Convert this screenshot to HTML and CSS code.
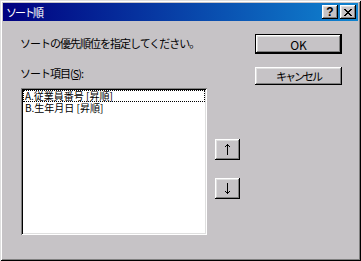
FILE: index.html
```html
<!DOCTYPE html>
<html lang="ja">
<head>
    <meta charset="UTF-8">
    <title>ソート順</title>
    <link rel="stylesheet" href="styles.css">
</head>
<body>
    <div class="window">
        <div class="titlebar">
            <span class="title">ソート順</span>
            <div class="title-buttons">
                <button class="tbtn help">?</button>
                <button class="tbtn close">
                    <svg width="8" height="7" viewBox="0 0 8 7" shape-rendering="crispEdges">
                        <path d="M0 0h2v1h-2zM6 0h2v1h-2zM1 1h2v1h-2zM5 1h2v1h-2zM2 2h4v1h-4zM3 3h2v1h-2zM2 4h4v1h-4zM1 5h2v1h-2zM5 5h2v1h-2zM0 6h2v1h-2zM6 6h2v1h-2z" fill="#000"/>
                    </svg>
                </button>
            </div>
        </div>
        <div class="content">
            <div class="main-col">
                <p class="message">ソートの優先順位を指定してください。</p>
                <p class="label">ソート項目(<u>S</u>):</p>
                <div class="listbox">
                    <div class="item focused">A.従業員番号 [昇順]</div>
                    <div class="item">B.生年月日 [昇順]</div>
                </div>
            </div>
            <div class="move-col">
                <button class="btn move">
                    <svg width="7" height="11" viewBox="0 0 7 11" shape-rendering="crispEdges">
                        <path d="M3 0h1v11h-1zM2 1h1v1h-1zM4 1h1v1h-1zM1 2h1v1h-1zM5 2h1v1h-1z" fill="#000"/>
                    </svg>
                </button>
                <button class="btn move">
                    <svg width="7" height="11" viewBox="0 0 7 11" shape-rendering="crispEdges">
                        <path d="M3 0h1v11h-1zM2 9h1v1h-1zM4 9h1v1h-1zM1 8h1v1h-1zM5 8h1v1h-1z" fill="#000"/>
                    </svg>
                </button>
            </div>
            <div class="action-col">
                <button class="btn action default">OK</button>
                <button class="btn action cancel">キャンセル</button>
            </div>
        </div>
    </div>
</body>
</html>
```

FILE: styles.css
```css
html, body {
    margin: 0;
    padding: 0;
    background: #c6c3c6;
}

body {
    font-family: "Noto Sans CJK JP", "Liberation Sans", sans-serif;
    font-size: 11px;
    letter-spacing: -1px;
    color: #000;
}

.window {
    width: 361px;
    height: 261px;
    box-sizing: border-box;
    padding: 3px;
    background: #c6c3c6;
    box-shadow: inset 1px 1px #dfdfdf, inset -1px -1px #000, inset 2px 2px #fff, inset -2px -2px #808080;
    display: flex;
    flex-direction: column;
}

.titlebar {
    height: 18px;
    background: linear-gradient(90deg, #000080, #1084d0);
    display: flex;
    align-items: center;
    justify-content: space-between;
    padding: 0 2px 0 3px;
}

.title {
    color: #fff;
    font-size: 11px;
    letter-spacing: -2px;
    line-height: 14px;
}

.title-buttons {
    display: flex;
    gap: 2px;
}

.tbtn {
    width: 16px;
    height: 14px;
    padding: 0;
    border: none;
    background: #c6c3c6;
    box-shadow: inset -1px -1px #000, inset 1px 1px #fff, inset -2px -2px #808080, inset 2px 2px #dfdfdf;
    display: flex;
    align-items: center;
    justify-content: center;
    font-family: "Liberation Sans", sans-serif;
    font-weight: bold;
    font-size: 12px;
    letter-spacing: 0;
    line-height: 12px;
}

.content {
    flex: 1;
    display: flex;
    padding: 13px 0 0 17px;
}

.main-col {
    width: 187px;
}

.message {
    margin: 2px 0 0;
    line-height: 14px;
    white-space: nowrap;
}

.label {
    margin: 16px 0 0;
    line-height: 14px;
    white-space: nowrap;
}

.listbox {
    margin: 8px 0 0 1px;
    width: 186px;
    height: 147px;
    box-sizing: border-box;
    padding: 2px;
    background: #fff;
    box-shadow: inset 1px 1px #808080, inset -1px -1px #fff, inset 2px 2px #000, inset -2px -2px #dfdfdf;
}

.item {
    height: 12px;
    line-height: 12px;
    padding-left: 2px;
    font-size: 10px;
    letter-spacing: 0;
    white-space: nowrap;
}

.item.focused {
    outline: 1px dotted #000;
    outline-offset: -1px;
}

.btn {
    padding: 0;
    border: none;
    background: #c6c3c6;
    box-shadow: inset -1px -1px #000, inset 1px 1px #fff, inset -2px -2px #808080, inset 2px 2px #dfdfdf;
    font-family: "Noto Sans CJK JP", "Liberation Sans", sans-serif;
    font-size: 11px;
    letter-spacing: -1px;
    color: #000;
    display: flex;
    align-items: center;
    justify-content: center;
}

.move-col {
    margin-left: 8px;
    padding-top: 105px;
    display: flex;
    flex-direction: column;
    gap: 18px;
}

.move {
    width: 25px;
    height: 21px;
}

.action-col {
    margin-left: 15px;
    display: flex;
    flex-direction: column;
    gap: 13px;
}

.action {
    width: 87px;
    height: 20px;
}

.action.default {
    font-size: 12px;
    letter-spacing: 0;
    box-shadow: inset 0 0 0 1px #000, inset -2px -2px #000, inset 2px 2px #fff, inset -3px -3px #808080, inset 3px 3px #dfdfdf;
}

.action.cancel {
    height: 18px;
    letter-spacing: -2px;
}
```
